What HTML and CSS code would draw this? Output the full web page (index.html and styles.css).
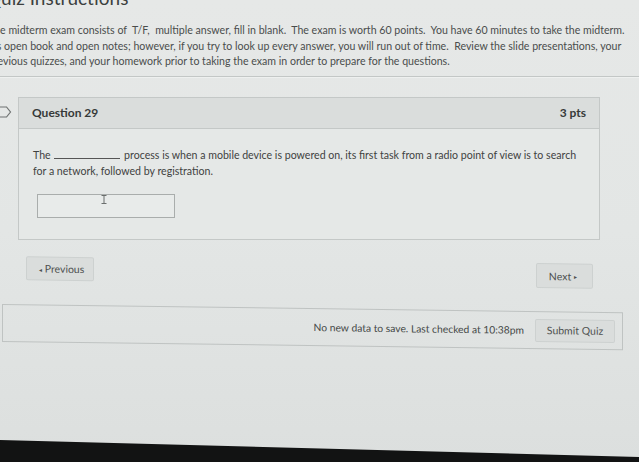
FILE: index.html
```html
<!DOCTYPE html>
<html>
<head>
<meta charset="utf-8">
<link rel="stylesheet" href="styles.css">
</head>
<body>
<div class="page">
  <h2 class="title">Quiz Instructions</h2>
  <div class="intro">
    <div>The midterm exam consists of&nbsp; T/F,&nbsp; multiple answer, fill in blank.&nbsp; The exam is worth 60 points.&nbsp; You have 60 minutes to take the midterm.</div>
    <div>It's open book and open notes; however, if you try to look up every answer, you will run out of time.&nbsp; Review the slide presentations, your</div>
    <div>previous quizzes, and your homework prior to taking the exam in order to prepare for the questions.</div>
  </div>
  <div class="divider"></div>

  <div class="qrow">
    <div class="flag">
      <svg width="16" height="12" viewBox="0 0 16 12"><path d="M0.5 1 H10.5 L14.5 6 L10.5 11 H0.5 Z" fill="none" stroke="#6f7372" stroke-width="1.2"/></svg>
    </div>
    <div class="question">
      <div class="qhead">
        <span class="qname">Question 29</span>
        <span class="qpts">3 pts</span>
      </div>
      <div class="qbody">
        <div class="qtext">The <span class="blank"></span> process is when a mobile device is powered on, its first task from a radio point of view is to search for a network, followed by registration.</div>
        <div class="answer">
          <div class="ibeam">
            <svg width="6" height="9" viewBox="0 0 6 9"><path d="M0.5 0.5 H5.5 M3 0.5 V8.5 M0.5 8.5 H5.5" fill="none" stroke="#6b6f6e" stroke-width="1"/></svg>
          </div>
        </div>
      </div>
    </div>
  </div>

  <div class="lower">
    <div class="nav">
      <div class="btn prev"><span class="arr">&#9666;</span> Previous</div>
      <div class="btn next">Next <span class="arr">&#9656;</span></div>
    </div>
    <div class="footer">
      <span class="status">No new data to save. Last checked at 10:38pm</span>
      <div class="btn submit">Submit Quiz</div>
    </div>
  </div>
</div>
<div class="bezel"></div>
</body>
</html>
```
FILE: styles.css
```css
html, body {
  margin: 0;
  padding: 0;
}
body {
  width: 639px;
  height: 462px;
  overflow: hidden;
  position: relative;
  background: linear-gradient(180deg, #e6e8e7 0%, #e3e6e5 50%, #dcdfde 100%);
  font-family: Lato, "Liberation Sans", sans-serif;
  color: #474a49;
}
.page {
  display: flex;
  flex-direction: column;
}
.title {
  margin: -12px 0 0 -14px;
  font-size: 19px;
  line-height: 20px;
  font-weight: 400;
  color: #3c3f3e;
  white-space: nowrap;
}
.intro {
  margin: 15px 0 0 -12px;
  font-size: 10.6px;
  line-height: 15.5px;
  color: #4a4d4c;
  white-space: nowrap;
}
.divider {
  margin-top: 6px;
  height: 0;
  border-top: 1px solid #c3c7c6;
  border-bottom: 1px solid #eef0ef;
}
.qrow {
  display: flex;
  margin: 19px 0 0 -4px;
}
.flag {
  width: 16px;
  margin: 9px 6px 0 0;
  display: flex;
}
.question {
  width: 580px;
  border: 1px solid #c4c8c7;
  background: #e5e8e7;
}
.qhead {
  height: 30px;
  display: flex;
  align-items: center;
  justify-content: space-between;
  padding: 0 13px 0 13px;
  background: #dadddc;
  border-bottom: 1px solid #c4c8c7;
  font-size: 12px;
  font-weight: 700;
  color: #363938;
}
.qbody {
  padding: 18px 14px 21px 14px;
}
.qtext {
  font-size: 10.6px;
  line-height: 16px;
  color: #3f4241;
  width: 550px;
}
.blank {
  display: inline-block;
  width: 66px;
  border-bottom: 1px solid #555;
  margin: 0 1px;
}
.answer {
  position: relative;
  margin: 15px 0 0 4px;
  width: 136px;
  height: 22px;
  border: 1px solid #a9adac;
  background: #e8ebea;
}
.ibeam {
  position: absolute;
  left: 63px;
  top: 0;
  display: flex;
}
.lower {
  transform: skewY(0.75deg);
  transform-origin: 0 0;
  display: flex;
  flex-direction: column;
}
.nav {
  margin: 16px 0 0 26px;
  width: 567px;
  display: flex;
  justify-content: space-between;
  align-items: flex-start;
}
.btn {
  box-sizing: border-box;
  display: flex;
  align-items: center;
  justify-content: center;
  background: #dadddc;
  border: 1px solid #cdd1d0;
  border-radius: 2px;
  font-size: 10.5px;
  color: #4d504f;
  white-space: nowrap;
}
.prev {
  width: 68px;
  height: 24px;
}
.next {
  width: 57px;
  height: 25px;
}
.arr {
  font-size: 6px;
  margin: 0 3px;
}
.footer {
  box-sizing: border-box;
  margin: 23px 0 0 2px;
  width: 621px;
  height: 38px;
  border: 1px solid #bfc3c2;
  display: flex;
  align-items: center;
  justify-content: flex-end;
  padding-right: 7px;
  gap: 11px;
}
.status {
  font-size: 10.3px;
  color: #454847;
}
.submit {
  width: 80px;
  height: 23px;
  font-size: 10.5px;
}
.bezel {
  position: absolute;
  left: 0;
  top: 430px;
  width: 639px;
  height: 32px;
  background: #121313;
  clip-path: polygon(0 10px, 100% 27px, 100% 100%, 0 100%);
}
```
